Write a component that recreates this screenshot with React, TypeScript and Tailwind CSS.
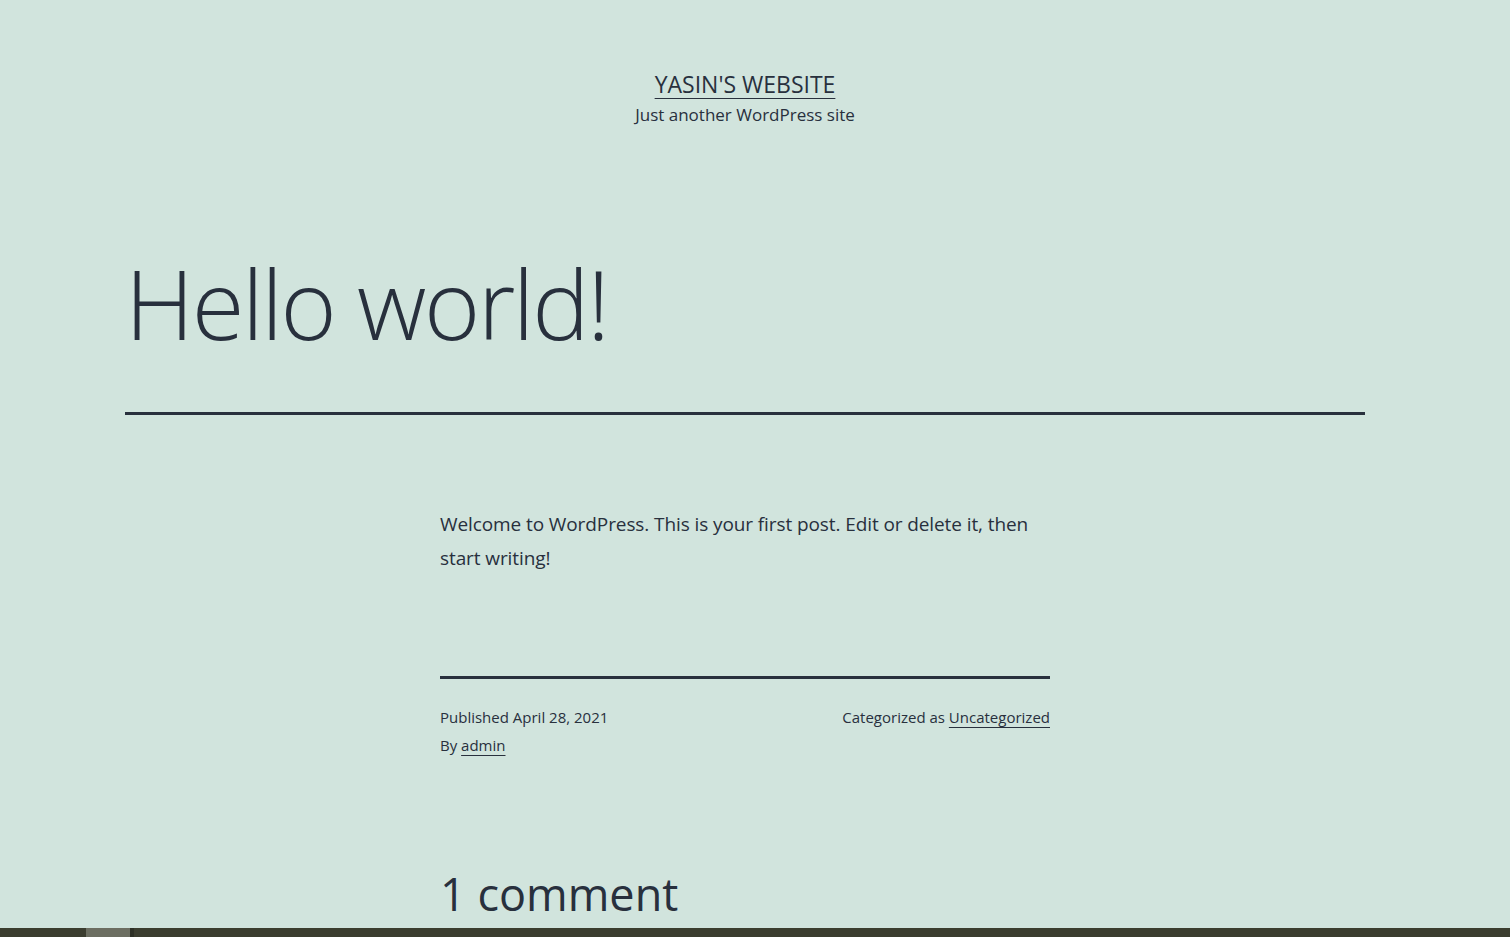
export default function App() {
  return (
    <div
      className="h-screen flex flex-col overflow-hidden bg-[#d1e4dd] text-[#28303d]"
      style={{ fontFamily: '"Open Sans", "Noto Sans", sans-serif' }}
    >
      <div className="flex-1 overflow-hidden pr-[20px]">
        {/* Site header */}
        <header className="pt-[69px] text-center">
          <a href="#" className="text-[23px] leading-[30px] uppercase underline underline-offset-[5px] decoration-1">
            Yasin's Website
          </a>
          <p className="mt-[3px] text-[17px] leading-[26px]">Just another WordPress site</p>
        </header>

        <main className="mx-auto w-[1240px]">
          <h1 className="mt-[120px] text-[96px] leading-[110px] font-light tracking-[-0.025em]">Hello world!</h1>
          <div className="mt-[54px] h-[3px] bg-[#28303d]" />

          <div className="mx-auto w-[610px]">
            <p className="mt-[92px] text-[19px] leading-[34px] tracking-[-0.005em]">
              Welcome to WordPress. This is your first post. Edit or delete it, then start writing!
            </p>

            <div className="mt-[101px] h-[3px] bg-[#28303d]" />

            <div className="mt-[24px] flex justify-between text-[15px] leading-[28px]">
              <div>
                <div>Published April 28, 2021</div>
                <div>
                  By <a href="#" className="underline underline-offset-[4px] decoration-1">admin</a>
                </div>
              </div>
              <div>
                Categorized as{" "}
                <a href="#" className="underline underline-offset-[4px] decoration-1">Uncategorized</a>
              </div>
            </div>

            <h2 className="mt-[104px] text-[45px] leading-[62px]">1 comment</h2>
          </div>
        </main>
      </div>

      {/* taskbar strip */}
      <div className="h-[9px] shrink-0 flex bg-[#3b3d2f]">
        <div className="w-[86px]" />
        <div className="w-[44px] bg-[#6c6e61]" />
        <div className="w-[4px] bg-[#2e3026]" />
        <div className="flex-1" />
      </div>
    </div>
  );
}
